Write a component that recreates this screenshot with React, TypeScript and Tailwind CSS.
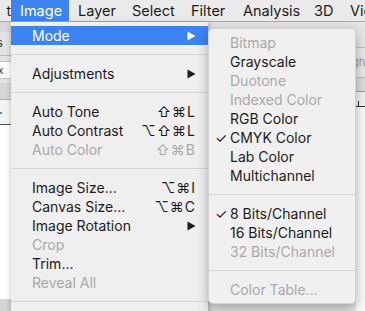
import React from 'react';

type Item =
  | { kind: 'sep' }
  | { kind: 'item'; label: string; shortcut?: string; disabled?: boolean; submenu?: boolean; active?: boolean; checked?: boolean };

const Arrow: React.FC<{ color: string }> = ({ color }) => (
  <svg width="9" height="10" viewBox="0 0 9 10" className="shrink-0">
    <path d="M0.5 0.5 L8.5 5 L0.5 9.5 Z" fill={color} />
  </svg>
);

const imageMenu: Item[] = [
  { kind: 'item', label: 'Mode', submenu: true, active: true },
  { kind: 'sep' },
  { kind: 'item', label: 'Adjustments', submenu: true },
  { kind: 'sep' },
  { kind: 'item', label: 'Auto Tone', shortcut: '⇧⌘L' },
  { kind: 'item', label: 'Auto Contrast', shortcut: '⌥⇧⌘L' },
  { kind: 'item', label: 'Auto Color', shortcut: '⇧⌘B', disabled: true },
  { kind: 'sep' },
  { kind: 'item', label: 'Image Size...', shortcut: '⌥⌘I' },
  { kind: 'item', label: 'Canvas Size...', shortcut: '⌥⌘C' },
  { kind: 'item', label: 'Image Rotation', submenu: true },
  { kind: 'item', label: 'Crop', disabled: true },
  { kind: 'item', label: 'Trim...' },
  { kind: 'item', label: 'Reveal All', disabled: true },
  { kind: 'sep' },
];

const modeMenu: Item[] = [
  { kind: 'item', label: 'Bitmap', disabled: true },
  { kind: 'item', label: 'Grayscale' },
  { kind: 'item', label: 'Duotone', disabled: true },
  { kind: 'item', label: 'Indexed Color', disabled: true },
  { kind: 'item', label: 'RGB Color' },
  { kind: 'item', label: 'CMYK Color', checked: true },
  { kind: 'item', label: 'Lab Color' },
  { kind: 'item', label: 'Multichannel' },
  { kind: 'sep' },
  { kind: 'item', label: '8 Bits/Channel', checked: true },
  { kind: 'item', label: '16 Bits/Channel' },
  { kind: 'item', label: '32 Bits/Channel', disabled: true },
  { kind: 'sep' },
  { kind: 'item', label: 'Color Table...', disabled: true },
];

const MenuRow: React.FC<{ item: Item }> = ({ item }) => {
  if (item.kind === 'sep') {
    return (
      <div className="h-[19px] flex items-center">
        <div className="w-full h-px bg-[#d6d6d6]" />
      </div>
    );
  }
  const text = item.active ? 'text-white' : item.disabled ? 'text-[#a9a9a9]' : 'text-[#1c1c1c]';
  return (
    <div className={`h-[19px] flex items-center pl-[21px] pr-[12px] relative ${item.active ? 'bg-[#3d84f3]' : ''} ${text}`}>
      {item.checked && <span className="absolute left-[6px] top-0 leading-[19px] text-[14px]">✓</span>}
      <span className="flex-1 whitespace-nowrap">{item.label}</span>
      {item.shortcut && <span className="whitespace-nowrap tracking-[1px]">{item.shortcut}</span>}
      {item.submenu && <Arrow color={item.active ? '#ffffff' : '#1c1c1c'} />}
    </div>
  );
};

const menuBar = [
  { label: 'Image', w: 'w-[58px]' },
  { label: 'Layer', w: 'w-[54px]' },
  { label: 'Select', w: 'w-[59px]' },
  { label: 'Filter', w: 'w-[52px]' },
  { label: 'Analysis', w: 'w-[71px]' },
  { label: '3D', w: 'w-[36px]' },
  { label: 'View', w: 'w-[40px]' },
];

const App: React.FC = () => {
  return (
    <div
      className="w-[365px] h-[311px] relative overflow-hidden bg-[#e3e3e3] text-[14px] leading-[19px]"
      style={{ fontFamily: 'Inter, "DejaVu Sans", sans-serif' }}
    >
      {/* menu bar */}
      <div className="h-[22px] flex items-stretch bg-[#eaeaea] border-b border-[#a9a9a9] text-[#1c1c1c] whitespace-nowrap">
        <div className="w-[11px] shrink-0 overflow-hidden flex items-center justify-end">
          <span>t</span>
        </div>
        {menuBar.map((m, i) => (
          <div key={m.label} className={`${m.w} shrink-0 pl-[9px] flex items-center text-[14.5px] ${i === 0 ? 'bg-[#3d84f3] text-white' : ''}`}>
            {m.label}
          </div>
        ))}
      </div>

      {/* app behind the menus */}
      <div className="flex h-[289px]">
        <div className="w-[11px] flex flex-col text-[11px] text-[#333]">
          <div className="h-[10px] bg-[#d8d8d8]" />
          <div className="h-[24px] bg-[#e2e2e2] border-b border-[#b8b8b8] flex items-center overflow-hidden">
            <span className="-ml-[3px]">s</span>
          </div>
          <div className="h-[5px] bg-[#e2e2e2]" />
          <div className="h-[18px] bg-white border-y border-[#c4c4c4] flex items-center overflow-hidden">
            <span className="-ml-[2px] text-[10px]">x</span>
          </div>
          <div className="h-[4px] bg-[#e2e2e2]" />
          <div className="h-[17px] bg-[#d6d6d6] border-b border-[#b0b0b0]" />
          <div className="h-[25px] bg-[#f4f4f4] border-b border-[#555] relative">
            <span className="absolute left-0 top-[12px] w-[2px] h-[2px] bg-[#3d84f3]" />
          </div>
          <div className="h-[174px] bg-white" />
          <div className="flex-1 bg-[#d4d4d4]" />
        </div>
        <div className="flex-1 bg-[#e3e3e3]" />
        <div className="w-[9px] flex flex-col text-[11px] text-[#999]">
          <div className="h-[26px] bg-[#e6e6e6] border-b border-[#bdbdbd]" />
          <div className="h-[30px] bg-[#e8e8e8] border-b border-[#bdbdbd] flex items-center overflow-hidden">
            <span className="-ml-[4px]">gh</span>
          </div>
          <div className="h-[14px] bg-[#dcdcdc] border-b border-[#9a9a9a]" />
          <div className="h-[15px] bg-[#f4f4f4] border-b border-[#333] relative">
            <span className="absolute left-[2px] top-[9px] w-px h-[6px] bg-[#333]" />
          </div>
          <div className="flex-1 bg-[#f9f9f9]" />
        </div>
      </div>

      {/* Image menu */}
      <div className="absolute left-[11px] top-[22px] w-[197px] h-[300px] bg-[#efefef] pt-[4px] shadow-[1px_2px_6px_rgba(0,0,0,0.35)]">
        {imageMenu.map((item, i) => (
          <MenuRow key={i} item={item} />
        ))}
      </div>

      {/* Mode submenu */}
      <div className="absolute left-[208px] top-[28px] w-[148px] bg-[#f0f0f0] rounded-[5px] py-[4px] border border-[#d2d2d2] shadow-[0_4px_12px_rgba(0,0,0,0.3)]">
        {modeMenu.map((item, i) => (
          <MenuRow key={i} item={item} />
        ))}
      </div>
    </div>
  );
};

export default App;
